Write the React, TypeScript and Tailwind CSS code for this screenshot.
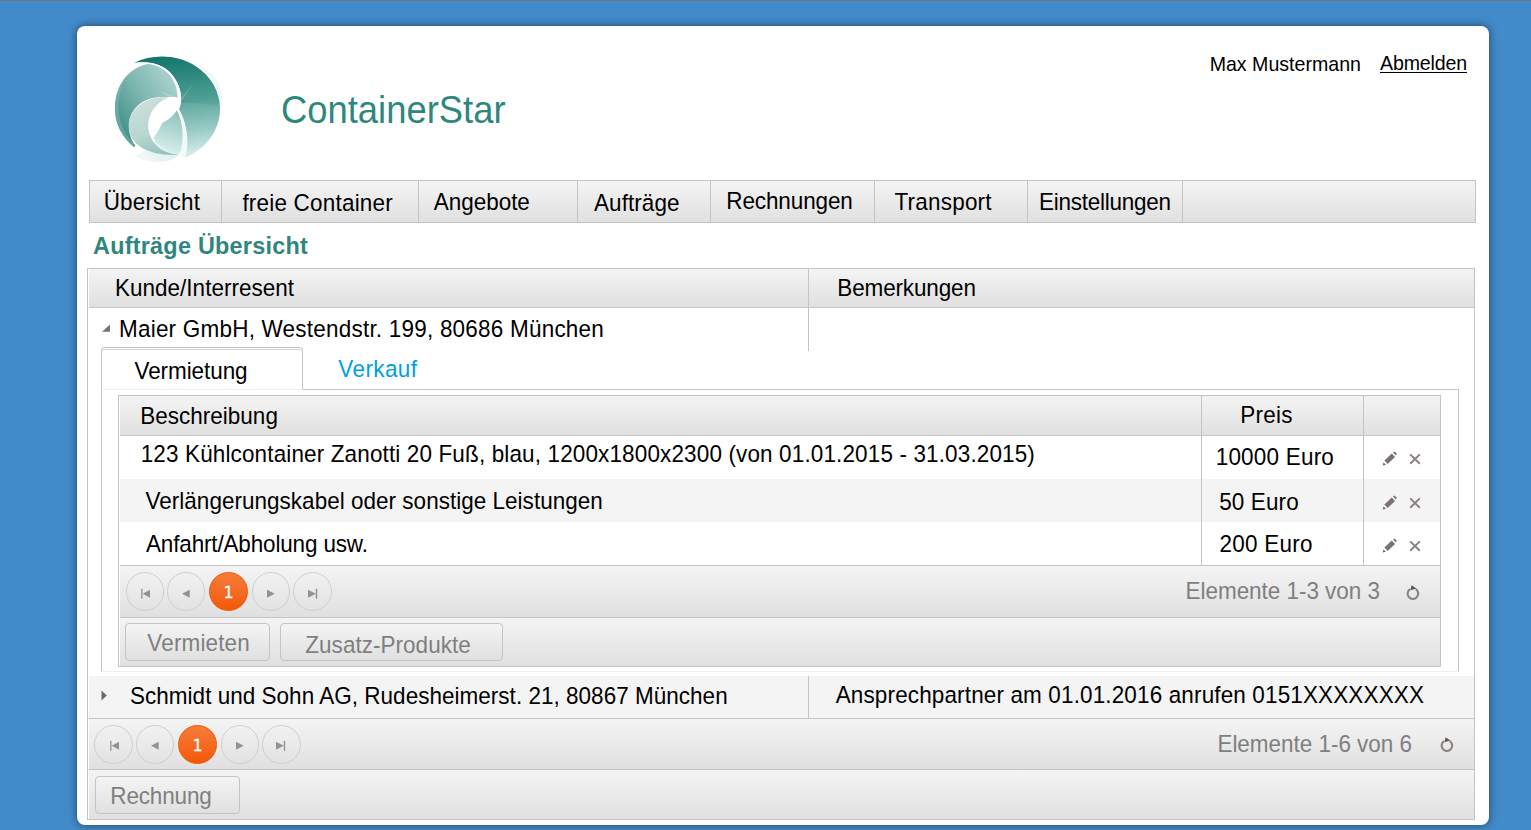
import type { ReactNode } from "react";

const BAR = "bg-linear-to-b from-[#f4f4f4] to-[#e0e0e0]";
const LINE = "border-[#c4c4c4]";

function Label({ className = "", children }: { className?: string; children: ReactNode }) {
  return (
    <span className={`block h-[25px] w-max shrink-0 origin-[0_20px] scale-y-106 whitespace-nowrap ${className}`}>
      {children}
    </span>
  );
}

function Logo() {
  return (
    <svg className="mt-[19px] ml-[23px] size-[130px] shrink-0" viewBox="0 0 390 390">
      <defs>
        <linearGradient id="dark" x1="0.45" y1="0" x2="0.55" y2="1">
          <stop offset="0" stopColor="#14776c" />
          <stop offset="0.45" stopColor="#4f9f96" />
          <stop offset="0.75" stopColor="#93c8c1" />
          <stop offset="1" stopColor="#d6efec" />
        </linearGradient>
        <linearGradient id="left" x1="0.9" y1="0.15" x2="0.1" y2="0.85">
          <stop offset="0" stopColor="#a9d1cd" />
          <stop offset="0.5" stopColor="#7cb5af" />
          <stop offset="1" stopColor="#3d8f86" />
        </linearGradient>
        <linearGradient id="pale" x1="0.3" y1="0" x2="0.6" y2="1">
          <stop offset="0" stopColor="#cde0dd" />
          <stop offset="0.6" stopColor="#b9d6d2" />
          <stop offset="1" stopColor="#93c5be" />
        </linearGradient>
        <linearGradient id="middle" x1="0.6" y1="0" x2="0.4" y2="1">
          <stop offset="0" stopColor="#90c3bd" />
          <stop offset="1" stopColor="#d9f0ed" />
        </linearGradient>
        <linearGradient id="foot" x1="1" y1="0" x2="0" y2="0.4">
          <stop offset="0" stopColor="#d3ebe8" />
          <stop offset="1" stopColor="#f1f9f8" />
        </linearGradient>
      </defs>
      <path d="M290 55C345 82 374 130 366 185L358 185C360 130 330 85 290 55Z" fill="#eef7f6" />
      <path d="M101 333C135 325 160 300 170 280L246 312C232 356 160 362 101 333Z" fill="url(#foot)" />
      <path d="M102 54C160 25 232 30 285 62C333 92 360 140 360 190C360 258 318 310 256 339C265 285 260 238 237 192C247 172 246 138 229 108C205 62 155 46 102 54Z" fill="url(#dark)" />
      <path d="M243 174C280 171 320 175 358 184C361 258 318 310 256 339C265 285 260 238 237 192Z" fill="#fff" opacity="0.08" />
      <path d="M102 54C155 46 205 62 229 108C246 138 247 172 237 192L231 195C243 160 234 70 142 54Z" fill="#fff" />
      <path d="M142 57C190 60 232 97 233 158C222 156 210 156 200 157C150 150 86 178 87 245C87 265 94 287 106 301L102 307C66 275 44 238 45 188C46 120 84 70 142 57Z" fill="url(#left)" />
      <path d="M57 160C50 210 64 262 106 301L102 307C66 275 44 238 45 188C46 150 60 115 80 93C68 110 60 135 57 160Z" fill="#8fc2bc" opacity="0.4" />
      <path d="M206 158C160 149 85 178 86 245C87 300 150 335 236 329C180 325 147 290 145 243C145 205 168 172 206 158Z" fill="url(#pale)" />
      <path d="M206 158C215 155 228 156 240 161C242 178 238 190 231 197C220 214 205 227 187 233C180 255 172 268 161 280C150 268 145 255 145 243C145 205 168 172 206 158Z" fill="#fff" />
      <path d="M231 195C254 235 256 290 236 326C202 321 175 302 160 278C172 264 180 248 187 233C205 226 220 212 231 195Z" fill="url(#middle)" />
      <path d="M230 196C252 232 252 300 240 332L256 339C268 285 262 238 236 190Z" fill="#f3f9f8" />
      <path d="M241 162L282 113L244 168Z" fill="#fff" opacity="0.22" />
      <path d="M175 137L226 156L214 158Z" fill="#fff" opacity="0.25" />
    </svg>
  );
}

function PageButton({ kind, wide, glyph = "" }: { kind: "first" | "prev" | "next" | "last"; wide?: boolean; glyph?: string }) {
  return (
    <span className={`h-[39px] rounded-full border border-[#cfcfcf] ${wide ? "w-[39px]" : "w-[38px]"}`}>
      <svg className={`block size-[36px] ${glyph}`} viewBox="1 1 36 36" fill="#97908c">
        {kind === "first" && <path d="M15.2 16.8H16.5V26.8H15.2ZM16.7 21.7L24 17.7V25.7Z" />}
        {kind === "prev" && <path d="M15 21.7L22.7 17.7V25.7Z" />}
        {kind === "next" && <path d="M22.7 21.7L15 17.7V25.7Z" />}
        {kind === "last" && <path d="M22.7 21.7L15 17.7V25.7ZM22.8 16.8H24.2V26.8H22.8Z" />}
      </svg>
    </span>
  );
}

function Pager({ wide }: { wide?: boolean }) {
  return (
    <div className={`flex ${wide ? "pt-[6px]" : "pt-[6px]"}`}>
      <PageButton kind="first" wide={wide} glyph={wide ? "translate-x-px -translate-y-px" : ""} />
      <span className="ml-[3px] flex">
        <PageButton kind="prev" glyph={wide ? "-translate-y-px" : ""} />
      </span>
      <span className="ml-[4px] h-[39px] w-[39px] rounded-full border border-[#f35800] bg-linear-to-b from-[#f67c38] to-[#f35800] pt-[10px] text-center font-['DejaVu_Sans',sans-serif] text-[16px] leading-[19px] tracking-normal text-white [-webkit-text-stroke:0.3px_white]">
        1
      </span>
      <span className="ml-[4px] flex">
        <PageButton kind="next" glyph={wide ? "-translate-y-px" : ""} />
      </span>
      <span className="ml-[3px] flex">
        <PageButton kind="last" wide glyph={wide ? "-translate-x-px -translate-y-px" : ""} />
      </span>
    </div>
  );
}

function Refresh({ className }: { className: string }) {
  return (
    <svg className={`h-[15px] w-[14px] shrink-0 ${className}`} viewBox="0 0 14 15">
      <path d="M9.8 4.2A5.3 5.3 0 1 1 4 4.2" fill="none" stroke="#8a817d" strokeWidth="2.1" />
      <path d="M4.4 5.2L5.6 0.2L10.4 3.4Z" fill="#5f5652" />
    </svg>
  );
}

function RowActions({ className }: { className: string }) {
  return (
    <div className={`flex pl-[18px] ${className}`}>
      <svg className="h-[15px] w-[16px]" viewBox="0 0 16 15">
        <path d="M4 11.2L11.4 4.2" stroke="#7b726e" strokeWidth="4.8" />
        <path d="M10.8 1.4L12.6 0.4L15 2.8L13.8 4.6Z" fill="#857c78" />
        <path d="M0.8 14.6L1.4 11.4L4 13.8Z" fill="#6f6662" />
      </svg>
      <svg className="mt-[2px] ml-[11px] size-[12px]" viewBox="0 0 12 12">
        <path d="M1.2 1.4L10.8 10.8M10.8 1.4L1.2 10.8" stroke="#8a827e" strokeWidth="2" />
      </svg>
    </div>
  );
}

function Button({ className, children }: { className: string; children: ReactNode }) {
  return (
    <button
      className={`flex h-[38px] flex-col justify-start rounded-[4px] border text-left text-[#7f7f7f] ${LINE} ${BAR} ${className}`}
    >
      {children}
    </button>
  );
}

const NAV = [
  { text: "Übersicht", cls: "w-[132px] pl-[13.7px] pt-[9px] tracking-[0.15px]" },
  { text: "freie Container", cls: "w-[197px] pl-[20.4px] pt-[10px] tracking-[0.2px]" },
  { text: "Angebote", cls: "w-[159px] pl-[14.7px] pt-[9px] tracking-[-0.02px]" },
  { text: "Aufträge", cls: "w-[133px] pl-[16px] pt-[10px] tracking-[0.06px]" },
  { text: "Rechnungen", cls: "w-[164px] pl-[15.3px] pt-[8px] tracking-[-0.12px]" },
  { text: "Transport", cls: "w-[153px] pl-[19.5px] pt-[9px] tracking-[0.2px]" },
  { text: "Einstellungen", cls: "w-[155px] pl-[11px] pt-[9px] tracking-[-0.25px]" },
];

const ITEMS = [
  {
    text: "123 Kühlcontainer Zanotti 20 Fuß, blau, 1200x1800x2300 (von 01.01.2015 - 31.03.2015)",
    price: "10000 Euro",
    row: "",
    textCls: "pt-[6px] pl-[20.7px] tracking-[0.133px]",
    priceCls: "pt-[9px] pl-[13.7px] tracking-[0.2px]",
    actions: "pt-[15px]",
  },
  {
    text: "Verlängerungskabel oder sonstige Leistungen",
    price: "50 Euro",
    row: "bg-[#f4f4f4]",
    textCls: "pt-[10px] pl-[25.5px] tracking-[0.017px]",
    priceCls: "pt-[11px] pl-[17.2px] tracking-[0.12px]",
    actions: "pt-[16px]",
  },
  {
    text: "Anfahrt/Abholung usw.",
    price: "200 Euro",
    row: "",
    textCls: "pt-[10px] pl-[26px] tracking-[-0.16px]",
    priceCls: "pt-[10px] pl-[17.5px] tracking-[0.25px]",
    actions: "pt-[16px]",
  },
];

function ItemGrid() {
  return (
    <div className={`ml-[16px] h-[272px] w-[1323px] border pl-px ${LINE}`}>
      <div className={`flex h-[40px] border-b ${LINE} ${BAR}`}>
        <div className={`w-[1082px] border-r pt-[8px] pl-[20.3px] ${LINE}`}>
          <Label>Beschreibung</Label>
        </div>
        <div className={`w-[162px] border-r pt-[7px] pl-[38.3px] tracking-[0.25px] ${LINE}`}>
          <Label>Preis</Label>
        </div>
      </div>
      {ITEMS.map((item) => (
        <div key={item.text} className={`flex h-[43px] ${item.row}`}>
          <div className={`w-[1082px] border-r ${LINE} ${item.textCls}`}>
            <Label>{item.text}</Label>
          </div>
          <div className={`w-[162px] border-r ${LINE} ${item.priceCls}`}>
            <Label>{item.price}</Label>
          </div>
          <RowActions className={item.actions} />
        </div>
      ))}
      <div className={`flex h-[52px] border-t pl-[6px] ${LINE} ${BAR}`}>
        <Pager />
        <Label className="mt-[13px] ml-auto tracking-[-0.036px] text-[#7f7f7f]">Elemente 1-3 von 3</Label>
        <Refresh className="mt-[19px] mr-[20px] ml-[26px]" />
      </div>
      <div className={`flex h-[49px] gap-[10px] border-t pt-[5px] pl-[5px] ${LINE} ${BAR}`}>
        <Button className="w-[145px] pt-[7px] pl-[21.3px] tracking-[0.15px]">
          <Label>Vermieten</Label>
        </Button>
        <Button className="w-[223px] pt-[9px] pl-[24.3px] tracking-[0.03px]">
          <Label>Zusatz-Produkte</Label>
        </Button>
      </div>
    </div>
  );
}

function CustomerGrid() {
  return (
    <div className={`mt-[9px] ml-[10px] h-[552px] w-[1388px] border pl-px ${LINE}`}>
      <div className={`flex h-[39px] border-b ${LINE} ${BAR}`}>
        <div className={`w-[720px] border-r pt-[7px] pl-[25.9px] tracking-[0.02px] ${LINE}`}>
          <Label>Kunde/Interresent</Label>
        </div>
        <div className="pt-[7px] pl-[28.3px] tracking-[-0.14px]">
          <Label>Bemerkungen</Label>
        </div>
      </div>

      <div className={`flex h-[43px] w-[720px] border-r pl-[13px] ${LINE}`}>
        <svg className="mt-[16px] size-[8px]" viewBox="0 0 8 8">
          <path d="M0 7.8L8 0.4V7.8Z" fill="#7b726e" />
        </svg>
        <Label className="mt-[9px] ml-[9px] tracking-[0.213px]">Maier GmbH, Westendstr. 199, 80686 München</Label>
      </div>

      <div className="-mt-[4px] ml-[12px] flex h-[43px] w-[1358px]">
        <div className={`w-[202px] rounded-t-[4px] border border-b-[#eeeeee] bg-white ${LINE}`}>
          <div className="mt-px rounded-t-[3px] border-t border-[#d4d4d4] pt-[9px] pl-[32.5px] tracking-[-0.08px]">
            <Label>Vermietung</Label>
          </div>
        </div>
        <div className={`grow border-b pt-[10px] pl-[35.3px] tracking-[0.4px] text-[#009fe3] ${LINE}`}>
          <Label>Verkauf</Label>
        </div>
      </div>
      <div className={`ml-[12px] h-[282px] w-[1358px] border-x border-b border-b-[#eeeeee] pt-[5px] ${LINE}`}>
        <ItemGrid />
      </div>

      <div className="mt-[4px] flex h-[42px] bg-[#f4f4f4]">
        <div className={`flex w-[720px] border-r pl-[12px] ${LINE}`}>
          <svg className="mt-[14px] h-[11px] w-[6px]" viewBox="0 0 6 11">
            <path d="M0.5 0.5L5.8 5.5L0.5 10.5Z" fill="#6f6662" />
          </svg>
          <Label className="mt-[8px] ml-[23px] tracking-[0.02px]">
            Schmidt und Sohn AG, Rudesheimerst. 21, 80867 München
          </Label>
        </div>
        <div className="pt-[7px] pl-[26.7px] tracking-[0.135px]">
          <Label>Ansprechpartner am 01.01.2016 anrufen 0151XXXXXXXX</Label>
        </div>
      </div>

      <div className={`flex h-[51px] border-t pl-[5px] ${LINE} ${BAR}`}>
        <Pager wide />
        <Label className="mt-[13px] ml-auto tracking-[-0.03px] text-[#7f7f7f]">Elemente 1-6 von 6</Label>
        <Refresh className="mt-[18px] mr-[20px] ml-[28px]" />
      </div>
      <div className={`h-[50px] border-t pt-[6px] pl-[6px] ${LINE} ${BAR}`}>
        <Button className="w-[145px] pt-[7px] pl-[14.3px] tracking-[-0.15px]">
          <Label>Rechnung</Label>
        </Button>
      </div>
    </div>
  );
}

export default function App() {
  return (
    <div className="h-[830px] w-[1531px] overflow-hidden border-t border-[#70757a] bg-[#428bca] pt-[25px] font-['Liberation_Sans',Arial,sans-serif] text-[22.5px] leading-[25px] text-black">
      <div className="ml-[77px] h-[799px] w-[1412px] rounded-[8px] bg-white shadow-[0_0_10px_rgba(0,0,0,0.5)]">
        <header className="flex h-[154px]">
          <Logo />
          <h1 className="mt-[64px] ml-[51px] h-[41px] origin-[0_33px] scale-y-106 text-[36.4px] leading-[41px] text-[#2f877c]">
            ContainerStar
          </h1>
          <span className="mt-[27px] mr-[19px] ml-auto h-[22px] origin-[0_18px] scale-y-106 text-[19.6px] leading-[22px]">
            Max Mustermann
          </span>
          <a className="mt-[26px] mr-[22px] h-[21px] w-[87px] border-b border-black">
            <span className="block h-[22px] w-max origin-[0_18px] scale-y-106 text-[19.6px] leading-[22px] tracking-[-0.15px]">
              Abmelden
            </span>
          </a>
        </header>
        <nav className={`ml-[12px] flex h-[43px] w-[1387px] border ${LINE} ${BAR}`}>
          {NAV.map((item) => (
            <div key={item.text} className={`shrink-0 border-r ${LINE} ${item.cls}`}>
              <Label>{item.text}</Label>
            </div>
          ))}
        </nav>
        <h2 className="mt-[11px] ml-[16px] text-[23.4px] font-bold tracking-[0.25px] text-[#2f877c]">
          <Label className="scale-y-102">Aufträge Übersicht</Label>
        </h2>
        <CustomerGrid />
      </div>
    </div>
  );
}
